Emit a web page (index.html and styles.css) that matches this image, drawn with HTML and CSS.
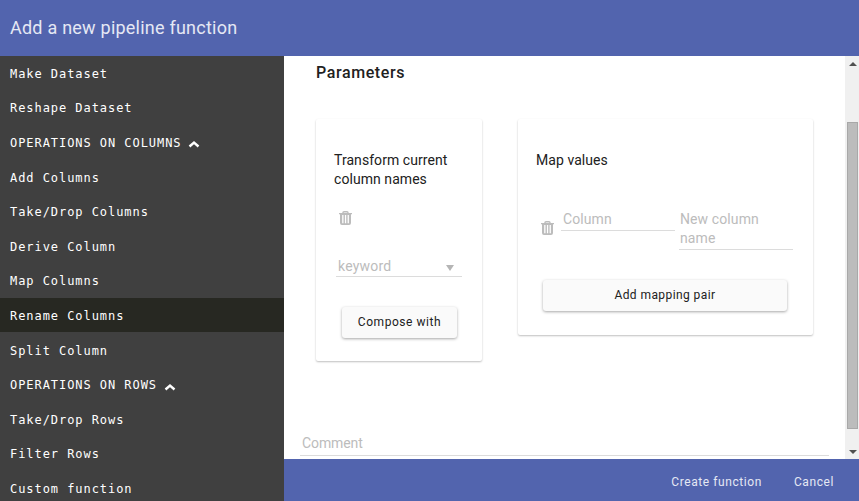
FILE: index.html
```html
<!DOCTYPE html>
<html lang="en">
<head>
<meta charset="utf-8">
<title>Add a new pipeline function</title>
<link rel="stylesheet" href="styles.css">
</head>
<body>
<header class="titlebar"><h1>Add a new pipeline function</h1></header>
<div class="body">
  <nav class="sidebar">
    <a class="item">Make Dataset</a>
    <a class="item">Reshape Dataset</a>
    <a class="item">OPERATIONS ON COLUMNS<svg class="chevron" width="12" height="8" viewBox="0 0 12 8"><path d="M1.5 6.5 6 2.5l4.500 4"/></svg></a>
    <a class="item">Add Columns</a>
    <a class="item">Take/Drop Columns</a>
    <a class="item">Derive Column</a>
    <a class="item">Map Columns</a>
    <a class="item selected">Rename Columns</a>
    <a class="item">Split Column</a>
    <a class="item">OPERATIONS ON ROWS<svg class="chevron" width="12" height="8" viewBox="0 0 12 8"><path d="M1.5 6.500 6 2.500l4.500 4"/></svg></a>
    <a class="item">Take/Drop Rows</a>
    <a class="item">Filter Rows</a>
    <a class="item">Custom function</a>
  </nav>
  <div class="main">
    <div class="viewport">
      <div class="content">
        <h2>Parameters</h2>
        <div class="cards">
          <section class="card transform">
            <h3>Transform current column names</h3>
            <svg class="trash" width="13" height="14" viewBox="0 0 13 14"><path class="lid" d="M4 2.500V1.700Q4 .7 5 .7h3q1 0 1 1v.8"/><path class="can" d="M0 2h13v1.200h-1V12q0 2-2 2H3q-2 0-2-2V3.200H0zM3.200 4v8.200h1.300V4zM5.900 4v8.200h1.300V4zM8.600 4v8.200h1.300V4z"/></svg>
            <div class="select"><span>keyword</span><i class="caret"></i></div>
            <button class="btn">Compose with</button>
          </section>
          <section class="card mapping">
            <h3>Map values</h3>
            <div class="pair">
              <svg class="trash" width="13" height="14" viewBox="0 0 13 14"><path class="lid" d="M4 2.500V1.700Q4 .7 5 .7h3q1 0 1 1v.8"/><path class="can" d="M0 2h13v1.200h-1V12q0 2-2 2H3q-2 0-2-2V3.200H0zM3.200 4v8.200h1.300V4zM5.900 4v8.200h1.300V4zM8.600 4v8.200h1.300V4z"/></svg>
              <div class="field">Column</div>
              <div class="field">New column name</div>
            </div>
            <button class="btn">Add mapping pair</button>
          </section>
        </div>
        <div class="comment">Comment</div>
      </div>
      <div class="scrollbar"><i class="up"></i><div class="thumb"></div><i class="down"></i></div>
    </div>
    <footer class="actions"><span class="create">Create function</span><span class="cancel">Cancel</span></footer>
  </div>
</div>
</body>
</html>
```
FILE: styles.css
```css
* { box-sizing: border-box; }
body { margin: 0; height: 501px; overflow: hidden; display: flex; flex-direction: column; background: #fff; color: #212121; font-family: Roboto, "Liberation Sans", sans-serif; }
h1, h2, h3 { margin: 0; font-weight: 400; }
.titlebar { height: 56px; flex: none; display: flex; align-items: center; padding: 0 0 2px 10px; background: #5264ae; color: #e5e8f4; }
.titlebar h1 { font-size: 18px; letter-spacing: .23px; }
.body { flex: 1; min-height: 0; display: flex; }
.sidebar { width: 284px; flex: none; overflow: hidden; background: #404040; color: #fff; font: 12px "DejaVu Sans Mono", monospace; letter-spacing: .94px; }
.item { height: 34.6px; display: flex; align-items: center; padding: 1px 0 0 10px; white-space: pre; }
.selected { height: 34.2px; margin-bottom: .4px; background: #272822; }
.chevron { margin: 3px 0 0 7px; fill: none; stroke: #fff; stroke-width: 2.4; }
.main { flex: 1; min-width: 0; display: flex; flex-direction: column; }
.viewport { height: 403px; display: flex; }
.content { flex: 1; padding: 7px 16px 0; }
h2 { padding-left: 16px; font-size: 16px; line-height: 20px; font-weight: 500; letter-spacing: .6px; }
.cards { display: flex; align-items: flex-start; gap: 36px; height: 317px; padding: 36px 0 0 16px; }
.card { flex: none; border-radius: 2px; padding: 32px 18px 0; box-shadow: 0 1px 2px rgba(0,0,0,.25); }
.transform { width: 166px; height: 242px; }
.mapping { width: 295px; height: 216px; }
h3 { font-size: 14px; line-height: 19px; letter-spacing: .06px; }
.trash { display: block; flex: none; }
.lid { fill: none; stroke: #bcbcbc; stroke-width: 1.4; }
.can { fill: #bcbcbc; fill-rule: evenodd; }
.transform .trash { margin: 22px 0 0 5px; }
.select { width: 126px; height: 21px; margin: 31px 0 0 2px; padding: 0 8px 0 2px; display: flex; align-items: center; justify-content: space-between; border-bottom: 1px solid #dcdcdc; color: #bcbcbc; font-size: 14px; letter-spacing: .2px; }
.caret { border: 4.5px solid transparent; border-top: 6px solid #b5b5b5; border-bottom: 0; margin-top: 3px; }
.btn { display: block; height: 31px; padding: 0 0 1px; border: 0; border-radius: 3px; background: #fafafa; box-shadow: 0 1px 3px rgba(0,0,0,.35); color: #212121; font: 400 12px Roboto, sans-serif; letter-spacing: .55px; }
.transform .btn { width: 115px; margin: 30px 0 0 8px; }
.mapping .btn { width: 244px; margin: 30px 0 0 7px; letter-spacing: .42px; }
.pair { display: flex; align-items: flex-start; margin: 40px -10px 0 5px; }
.pair .trash { margin: 11px 7px 0 0; }
.field { flex: none; width: 114px; padding: 0 20px 1px 2px; border-bottom: 1px solid #dcdcdc; color: #bcbcbc; font-size: 14px; line-height: 19px; letter-spacing: .1px; }
.field + .field { margin-left: 4px; padding-left: 1px; }
.comment { width: 529px; height: 21px; margin-top: 35px; padding-left: 2px; border-bottom: 1px solid #dcdcdc; color: #bcbcbc; font-size: 14px; line-height: 16px; letter-spacing: -.1px; }
.scrollbar { width: 14px; flex: none; padding: 6px 1px 5px 2px; display: flex; flex-direction: column; align-items: center; background: #f0f0f0; }
.up, .down { flex: none; border: 4px solid transparent; }
.up { border-top: 0; border-bottom-color: #505050; }
.down { margin-top: auto; border-bottom: 0; border-top-color: #505050; }
.thumb { width: 11px; height: 307px; flex: none; margin-top: 56px; background: #bcbcbc; border: 1px solid #a8a8a8; }
.actions { height: 42px; flex: none; display: flex; align-items: center; justify-content: flex-end; gap: 32px; padding: 3px 25px 0 0; background: #5264ae; color: #e5e8f4; font-size: 12px; letter-spacing: .58px; }
```
